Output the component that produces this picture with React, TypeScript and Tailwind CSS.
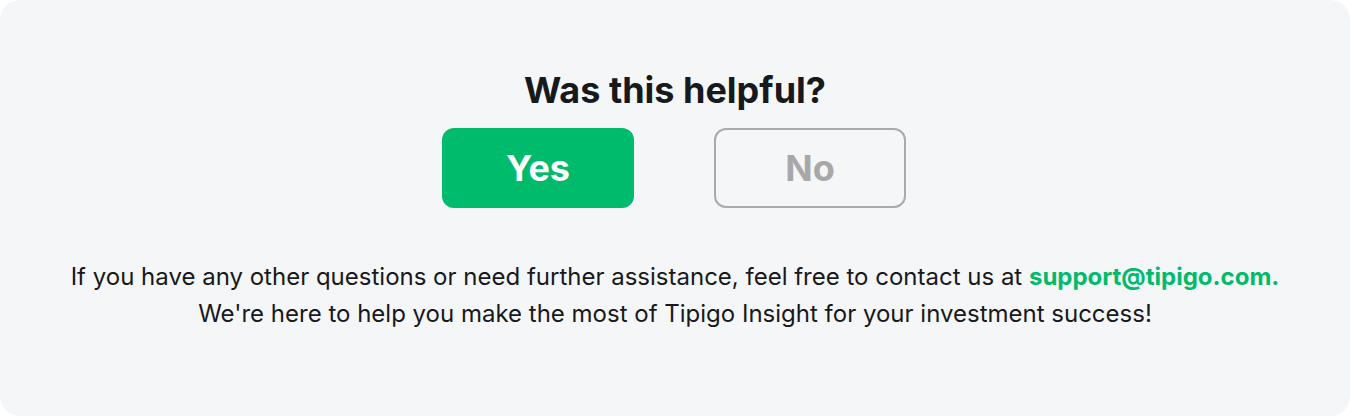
export default function App() {
  return (
    <div className="w-[1350px] h-[416px] bg-white font-['Inter',sans-serif]">
      <div className="h-full rounded-[20px] bg-[#f5f6f8] flex flex-col items-center pt-[70px]">
        <h2 className="text-[36px] leading-[40px] font-bold text-[#17191c]">
          Was this helpful?
        </h2>
        <div className="mt-[18px] flex gap-[80px] -translate-x-px">
          <button className="w-[192px] h-[80px] rounded-[12px] bg-[#00bb6b] text-white text-[36px] font-bold">
            Yes
          </button>
          <button className="w-[192px] h-[80px] rounded-[12px] border-2 border-[#aaaaaa] text-[#a8a8a8] text-[36px] font-bold">
            No
          </button>
        </div>
        <p className="mt-[50px] text-[24px] leading-[37px] text-[#17191c] text-center">
          If you have any other questions or need further assistance, feel free to contact us at{' '}
          <a className="font-bold text-[#00bb6b]">support@tipigo.com.</a>
          <br />
          We're here to help you make the most of Tipigo Insight for your investment success!
        </p>
      </div>
    </div>
  )
}
